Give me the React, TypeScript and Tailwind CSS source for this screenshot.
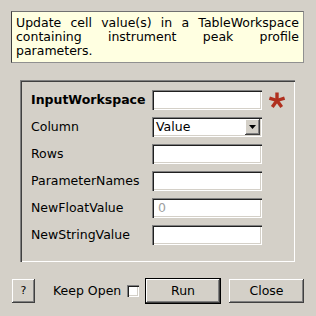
import React from 'react'

const sunken =
    'bg-white shadow-[inset_1px_1px_0_#808080,inset_2px_2px_0_#202020,inset_-1px_-1px_0_#ffffff,inset_-2px_-2px_0_#d4d0c8]'
const raised =
    'bg-[#d4d0c8] shadow-[inset_-1px_-1px_0_#404040,inset_1px_1px_0_#ffffff,inset_-2px_-2px_0_#808080]'

const Asterisk = () => (
    <svg width="18" height="16" viewBox="0 0 18 16" className="ml-[6px]">
        <g stroke="#b0301f" strokeWidth="3.4" strokeLinecap="butt">
            {[-90, -18, 54, 126, 198].map((a) => {
                const r = (a * Math.PI) / 180
                return (
                    <line
                        key={a}
                        x1={9}
                        y1={8.5}
                        x2={9 + Math.cos(r) * 8}
                        y2={8.5 + Math.sin(r) * 8}
                    />
                )
            })}
        </g>
    </svg>
)

const Row = ({
    label,
    bold,
    children,
}: {
    label: string
    bold?: boolean
    children: React.ReactNode
}) => (
    <div className="flex items-center h-[20px]">
        <span className={`w-[121px] ${bold ? 'font-bold' : ''}`}>{label}</span>
        {children}
    </div>
)

const Field = ({ placeholder }: { placeholder?: string }) => (
    <div className={`w-[110px] h-[20px] ${sunken} flex items-center pl-[6px] text-[#a0a0a0]`}>
        {placeholder}
    </div>
)

export default function App() {
    return (
        <div className="w-[316px] h-[316px] bg-[#d4d0c8] font-['DejaVu_Sans',sans-serif] text-[12.5px] text-black flex flex-col overflow-hidden">
            <div className="mt-[11px] ml-[11px] mr-[12px] h-[52px] bg-[#ffffe1] border border-[#909090] border-l-[#404040] border-t-[#707070] px-[4px] pt-[4px] leading-[14px] text-justify">
                Update cell value(s) in a TableWorkspace containing instrument peak profile
                parameters.
            </div>

            <div className="mt-[17px] ml-[20px] mr-[21px] h-[182px] shadow-[inset_1px_1px_0_#808080,inset_2px_2px_0_#404040,inset_-1px_-1px_0_#ffffff] pl-[11px] pt-[10px] flex flex-col gap-[7px]">
                <Row label="InputWorkspace" bold>
                    <Field />
                    <Asterisk />
                </Row>
                <Row label="Column">
                    <div className={`w-[110px] h-[20px] ${sunken} flex items-center justify-between pl-[4px] pr-[2px]`}>
                        <span>Value</span>
                        <div className={`w-[15px] h-[16px] ${raised} flex items-center justify-center`}>
                            <svg width="7" height="4" viewBox="0 0 7 4">
                                <path d="M0 0H7L3.5 4Z" fill="#000" />
                            </svg>
                        </div>
                    </div>
                </Row>
                <Row label="Rows">
                    <Field />
                </Row>
                <Row label="ParameterNames">
                    <Field />
                </Row>
                <Row label="NewFloatValue">
                    <Field placeholder="0" />
                </Row>
                <Row label="NewStringValue">
                    <Field />
                </Row>
            </div>

            <div className="mt-[16px] h-[26px] flex items-center">
                <div className={`ml-[12px] w-[23px] h-[24px] ${raised} flex items-center justify-center text-[11px]`}>
                    ?
                </div>
                <span className="ml-[18px] w-[69px]">Keep Open</span>
                <div className={`ml-[5px] w-[12px] h-[12px] ${sunken}`} />
                <div className="ml-[6px] w-[76px] h-[26px] border border-black">
                    <div className={`w-full h-full ${raised} flex items-center justify-center`}>
                        Run
                    </div>
                </div>
                <div className={`ml-[8px] w-[75px] h-[24px] ${raised} flex items-center justify-center`}>
                    Close
                </div>
            </div>
        </div>
    )
}
